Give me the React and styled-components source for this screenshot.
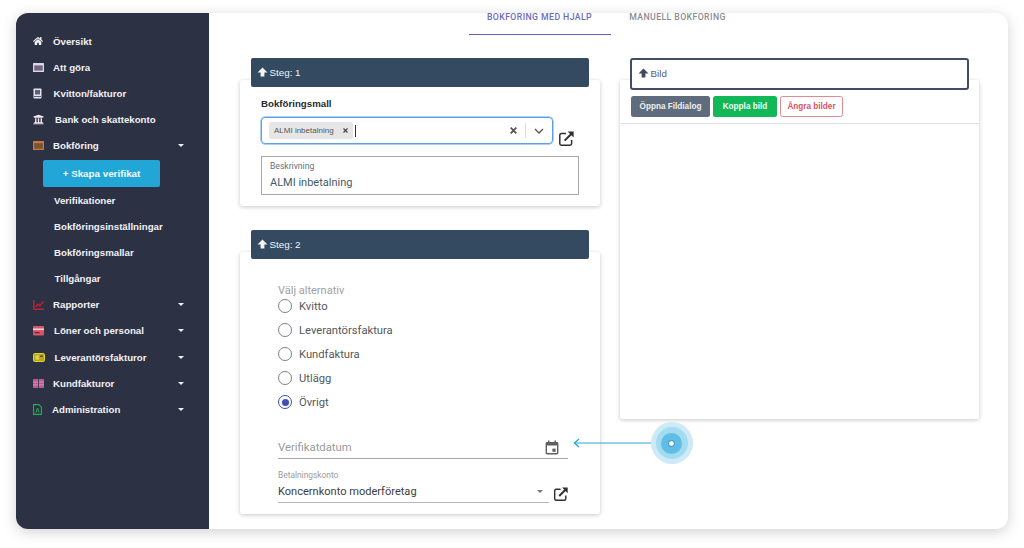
import React from 'react';
import styled, { createGlobalStyle } from 'styled-components';
import { FaHome, FaUniversity } from 'react-icons/fa';

const Global = createGlobalStyle`
  html, body { margin: 0; padding: 0; background: #fff; }
  body { font-family: Roboto, "Liberation Sans", sans-serif; }
  * { box-sizing: border-box; }
`;

const Page = styled.div`
  width: 1024px;
  height: 548px;
  padding: 13px 16px 19px;
  overflow: hidden;
  position: relative;
`;
const Shell = styled.div`
  display: flex;
  height: 516px;
  border-radius: 12px;
  overflow: hidden;
  background: #fff;
  box-shadow: 0 3px 14px rgba(0, 0, 0, 0.18);
`;
const Sidebar = styled.nav`
  width: 193px;
  flex: none;
  background: #2c3144;
  padding-top: 15px;
  display: flex;
  flex-direction: column;
`;
const NavRow = styled.div`
  height: 26.2px;
  flex: none;
  display: flex;
  align-items: center;
  padding-left: ${p => p.$left || 17}px;
  padding-right: 25px;
  font: bold 9.7px "Liberation Sans", Arial, sans-serif;
  color: #f1f1f5;
  white-space: nowrap;
`;
const IconSlot = styled.span`
  width: ${p => p.$w}px;
  flex: none;
  display: flex;
  align-items: center;
`;
const Caret = styled.span`
  margin-left: auto;
  width: 0;
  height: 0;
  border-left: 3.5px solid transparent;
  border-right: 3.5px solid transparent;
  border-top: 3.5px solid #f1f1f5;
`;
const SubRow = styled(NavRow)`
  padding-left: ${p => p.$left || 38}px;
`;
const CreateBtn = styled.div`
  margin: 1px 0 0 27px;
  width: 117px;
  height: 27px;
  flex: none;
  background: #22a6d8;
  border-radius: 2px;
  display: flex;
  align-items: center;
  justify-content: center;
  color: #f4fbfe;
  font: bold 9.8px "Liberation Sans", Arial, sans-serif;
`;
const Main = styled.main`
  flex: 1;
  min-width: 0;
  display: flex;
  flex-direction: column;
`;
const Tabs = styled.div`
  display: flex;
  height: 22px;
  margin-left: 260px;
`;
const Tab = styled.div`
  width: ${p => p.$w}px;
  height: 21.5px;
  text-align: center;
  padding-right: 1px;
  font: 500 8.7px/9px Roboto, sans-serif;
  letter-spacing: 0.42px;
  color: ${p => (p.$active ? '#6b6bbd' : '#8b8c92')};
  border-bottom: ${p => (p.$active ? '1.5px solid #5f62b8' : 'none')};
  white-space: nowrap;
`;
const Columns = styled.div`
  display: flex;
  padding-left: 31px;
  gap: 20px;
  margin-top: 23px;
`;
const LeftCol = styled.div`
  width: 360px;
  display: flex;
  flex-direction: column;
  gap: 24px;
`;
const RightCol = styled.div`
  width: 359px;
`;
const StepBar = styled.div`
  margin: 0 11px 0 10.5px;
  height: 29px;
  background: #344a60;
  border-radius: 2px;
  display: flex;
  align-items: center;
  gap: 1.5px;
  padding-left: 6.5px;
  padding-bottom: 1px;
  color: #f2f4f6;
  font: 400 9.8px "Liberation Sans", Arial, sans-serif;
  position: relative;
  z-index: 1;
`;
const Card = styled.section`
  background: #fff;
  border-radius: 3px;
  box-shadow: 0 1px 4px rgba(0, 0, 0, 0.22);
  margin-top: -7px;
  padding-top: 7px;
  height: ${p => p.$h}px;
`;
const Arrow = ({ color }) => (
  <svg width="11" height="10" viewBox="0 0 11 10">
    <path d="M5.5.6 10.5 5.5H7.4V9.6H3.6V5.5H.5Z" fill={color} />
  </svg>
);
const MallLabel = styled.div`
  margin: 10px 0 0 21px;
  font: bold 9.7px/14px "Liberation Sans", Arial, sans-serif;
  color: #2a2a2a;
`;
const MallRow = styled.div`
  display: flex;
  margin: 6px 0 0 21px;
  height: 27px;
  align-items: flex-start;
`;
const Select = styled.div`
  width: 292px;
  height: 27px;
  border: 1px solid #5d9fe8;
  border-radius: 4px;
  box-shadow: 0 0 0 0.5px #5d9fe8;
  display: flex;
  align-items: center;
  padding-left: 7px;
`;
const Chip = styled.div`
  height: 17px;
  width: 84px;
  background: #e6e6e6;
  border-radius: 2px;
  display: flex;
  align-items: center;
  justify-content: space-between;
  padding: 0 5px;
  font: 400 8px "Liberation Sans", Arial, sans-serif;
  color: #555;
`;
const Cursor = styled.span`
  width: 1px;
  height: 12px;
  background: #333;
  margin-left: 2px;
`;
const SelectEnd = styled.div`
  margin-left: auto;
  display: flex;
  align-items: center;
  height: 100%;
  padding-right: 8px;
`;
const Sep = styled.span`
  width: 1px;
  height: 15px;
  background: #ddd;
  margin: 0 8px;
`;
const LinkBox = styled.span`
  display: block;
  margin: ${p => p.$m};
  line-height: 0;
`;
const DescBox = styled.div`
  margin: 12px 0 0 21px;
  width: 318px;
  height: 39px;
  border: 1px solid #a9a9ab;
  padding: 4px 8px;
`;
const DescLabel = styled.div`
  font: 400 8.6px/11px Roboto, sans-serif;
  color: #66707a;
`;
const DescValue = styled.div`
  font: 400 11px/15px Roboto, sans-serif;
  color: #3f5a6c;
  margin-top: 3px;
`;
const Options = styled.div`
  margin: 25px 0 0 38px;
`;
const OptLegend = styled.div`
  font: 400 11px/14px Roboto, sans-serif;
  color: #a0a0a0;
`;
const OptRow = styled.label`
  height: 24px;
  display: flex;
  align-items: center;
  gap: 7px;
  font: 400 11.2px Roboto, sans-serif;
  color: #55585b;
  margin-top: ${p => (p.$first ? '-4px' : 0)};
`;
const Radio = styled.span`
  width: 14px;
  height: 14px;
  border-radius: 50%;
  border: 1.4px solid ${p => (p.$on ? '#3f51b5' : '#7f7f7f')};
  display: flex;
  align-items: center;
  justify-content: center;
  &::after {
    content: '';
    display: ${p => (p.$on ? 'block' : 'none')};
    width: 7px;
    height: 7px;
    border-radius: 50%;
    background: #3f51b5;
  }
`;
const DateField = styled.div`
  margin: 21px 0 0 38px;
  width: 290px;
  height: 24px;
  border-bottom: 1px solid #a8a8a8;
  display: flex;
  align-items: center;
  justify-content: space-between;
  padding: 2px 9px 0 0;
  font: 400 11.3px Roboto, sans-serif;
  color: #9a9a9a;
`;
const AccountLabel = styled.div`
  margin: 10.5px 0 0 38px;
  font: 400 8.4px/11px Roboto, sans-serif;
  color: #9b9b9b;
`;
const AccountRow = styled.div`
  display: flex;
  margin-left: 38px;
  align-items: flex-start;
`;
const AccountSelect = styled.div`
  width: 271px;
  height: 22px;
  border-bottom: 1px solid #b5b5b5;
  display: flex;
  align-items: center;
  justify-content: space-between;
  padding-right: 6px;
  font: 400 11.05px Roboto, sans-serif;
  color: #3d3d3d;
`;
const SmallCaret = styled.span`
  width: 0;
  height: 0;
  border-left: 3.5px solid transparent;
  border-right: 3.5px solid transparent;
  border-top: 3.5px solid #777;
`;
const BildBar = styled.div`
  margin: 0 10px;
  height: 32px;
  background: #fff;
  border: 2px solid #414d64;
  border-radius: 3px;
  display: flex;
  align-items: center;
  gap: 1.5px;
  padding: 0 0 2px 6px;
  font: 400 9.8px "Liberation Sans", Arial, sans-serif;
  color: #5a6068;
  position: relative;
  z-index: 1;
`;
const ImageCard = styled.section`
  margin-top: -10px;
  height: 339px;
  background: #fff;
  border-radius: 2px;
  box-shadow: 0 1px 4px rgba(0, 0, 0, 0.22);
`;
const BtnRow = styled.div`
  display: flex;
  gap: 3px;
  padding: 16px 0 0 11px;
  height: 44px;
  border-bottom: 1px solid #e2e2e2;
`;
const Btn = styled.div`
  height: 21px;
  width: ${p => p.$w}px;
  border-radius: 2.5px;
  display: flex;
  align-items: center;
  justify-content: center;
  font: bold 8.2px "Liberation Sans", Arial, sans-serif;
  color: ${p => p.$fg};
  background: ${p => p.$bg};
  border: ${p => (p.$line ? `1px solid ${p.$line}` : 'none')};
`;
const Hotspot = styled.div`
  position: absolute;
  left: 650.5px;
  top: 422px;
  width: 42px;
  height: 42px;
  border-radius: 50%;
  background: #cdeaf6;
  display: flex;
  align-items: center;
  justify-content: center;
  &::before {
    content: '';
    position: absolute;
    width: 32px;
    height: 32px;
    border-radius: 50%;
    background: #a3dbf0;
  }
  &::after {
    content: '';
    position: absolute;
    width: 21px;
    height: 21px;
    border-radius: 50%;
    background: #5fbde6;
  }
`;
const HotDot = styled.span`
  width: 7px;
  height: 7px;
  border-radius: 50%;
  background: #fff;
  border: 1px solid #2a87bd;
  position: relative;
  z-index: 1;
`;
const Pointer = styled.svg`
  position: absolute;
  left: 573px;
  top: 437px;
`;

const Ext = ({ s = 17 }) => (
  <svg width={s} height={s} viewBox="0 0 17 17" fill="none" stroke="#2f2f2f">
    <path d="M8 3.4H3.4a1.6 1.6 0 0 0-1.6 1.6v8.6a1.6 1.6 0 0 0 1.6 1.6H12a1.6 1.6 0 0 0 1.6-1.6V10" strokeWidth="1.5" />
    <path d="M6.6 10.6 14 3.2" strokeWidth="2" />
    <path d="M9.6 1.6H15.6V7.6Z" fill="#2f2f2f" stroke="none" />
  </svg>
);
const Cal = () => (
  <svg width="14" height="15" viewBox="0 0 14 15" fill="#5f5f5f">
    <path fillRule="evenodd" d="M3 .6h1.5v1.5h5V.6H11v1.5h1a1.4 1.4 0 0 1 1.4 1.4v9.6a1.4 1.4 0 0 1-1.4 1.4H2A1.4 1.4 0 0 1 .6 13.1V3.5A1.4 1.4 0 0 1 2 2.1h1ZM2 5.6v7.5h10V5.6Z" />
    <rect x="7.4" y="8.6" width="3.2" height="3.2" />
  </svg>
);
const X = ({ s = 6, w = 1.5, c = '#444' }) => (
  <svg width={s} height={s} viewBox="0 0 6 6" stroke={c} strokeWidth={w}><path d="M.6.6l4.8 4.8M5.4.6L.6 5.4" /></svg>
);

const TodoIcon = () => (
  <svg width="11" height="9" viewBox="0 0 11 9">
    <rect width="11" height="9" rx=".6" fill="#d9d9e6" />
    <rect x="1.2" y="2.4" width="8.6" height="5.2" fill="#77647e" />
  </svg>
);
const BookIcon = () => (
  <svg width="11" height="9" viewBox="0 0 11 9">
    <rect width="11" height="9" rx=".6" fill="#c47a3c" />
    <rect x="1.2" y="2.2" width="8.6" height="5.5" fill="#7c5230" />
  </svg>
);
const ReceiptIcon = () => (
  <svg width="9" height="11" viewBox="0 0 9 11">
    <rect x=".5" y=".5" width="8" height="10" rx=".8" fill="#e4e4ec" />
    <rect x="2" y="2" width="5" height="4.5" fill="#5c6074" />
    <rect x="1" y="8" width="7" height="1" fill="#5c6074" />
  </svg>
);
const ChartIcon = () => (
  <svg width="11" height="10" viewBox="0 0 11 10" fill="none" stroke="#c21f2f" strokeWidth="1.5">
    <path d="M.8 0v9.2H11" />
    <path d="M2.5 7 5 4.2l1.8 1.6L10.5 1.5" />
  </svg>
);
const PayIcon = () => (
  <svg width="11" height="10" viewBox="0 0 11 10">
    <rect width="11" height="9.5" rx="1" fill="#d6556a" />
    <rect y="2.5" width="11" height="1.6" fill="#f3cfd5" />
    <rect x="1.5" y="6" width="5" height="1.2" fill="#5a2a3a" />
  </svg>
);
const SupplierIcon = () => (
  <svg width="12" height="9" viewBox="0 0 12 9">
    <rect x=".5" y=".5" width="11" height="8" rx="1.2" fill="#b3a62c" stroke="#e3d22f" />
    <rect x="2.5" y="2.2" width="3.5" height="4.5" fill="#e3d22f" />
    <rect x="7" y="2.5" width="3" height="1.5" fill="#56561f" />
  </svg>
);
const CustomerIcon = () => (
  <svg width="11" height="9" viewBox="0 0 11 9">
    <rect width="11" height="9" rx=".6" fill="#b85c90" />
    <rect y="2.6" width="11" height="1" fill="#e28cbd" />
    <rect y="5.4" width="11" height="1" fill="#e28cbd" />
    <rect x="5" width="1" height="9" fill="#4a3f5c" />
  </svg>
);
const FileIcon = () => (
  <svg width="9" height="11" viewBox="0 0 9 11" fill="none">
    <path d="M.6.6h5.2l2.6 2.6v7.200H.6Z" stroke="#22b14c" strokeWidth="1.1" />
    <path d="M3 8.5 4.5 4 6 8.5" stroke="#22b14c" strokeWidth="1" />
  </svg>
);

const nav1 = [
  { t: 'Översikt', w: 20, icon: <FaHome size={10} color="#f1f1f5" /> },
  { t: 'Att göra', w: 20, icon: <TodoIcon /> },
  { t: 'Kvitton/fakturor', w: 20.5, icon: <ReceiptIcon /> },
  { t: 'Bank och skattekonto', w: 22, icon: <FaUniversity size={11} color="#f3e9f1" /> },
  { t: 'Bokföring', w: 20, caret: true, icon: <BookIcon /> },
];
const subs = [
  { t: 'Verifikationer' },
  { t: 'Bokföringsinställningar' },
  { t: 'Bokföringsmallar' },
  { t: 'Tillgångar', left: 38.5 },
];
const nav2 = [
  { t: 'Rapporter', w: 20, icon: <ChartIcon /> },
  { t: 'Löner och personal', w: 21, icon: <PayIcon /> },
  { t: 'Leverantörsfakturor', w: 21.5, icon: <SupplierIcon /> },
  { t: 'Kundfakturor', w: 20, icon: <CustomerIcon /> },
  { t: 'Administration', w: 19, icon: <FileIcon /> },
];
const options = ['Kvitto', 'Leverantörsfaktura', 'Kundfaktura', 'Utlägg', 'Övrigt'];

export default function App() {
  return (
    <Page>
      <Global />
      <Shell>
        <Sidebar>
          {nav1.map(n => (
            <NavRow key={n.t}>
              <IconSlot $w={n.w}>{n.icon}</IconSlot>
              {n.t}
              {n.caret && <Caret />}
            </NavRow>
          ))}
          <CreateBtn>+ Skapa verifikat</CreateBtn>
          {subs.map(s => (
            <SubRow key={s.t} $left={s.left}>{s.t}</SubRow>
          ))}
          {nav2.map(n => (
            <NavRow key={n.t}>
              <IconSlot $w={n.w}>{n.icon}</IconSlot>
              {n.t}
              <Caret />
            </NavRow>
          ))}
        </Sidebar>
        <Main>
          <Tabs>
            <Tab $w={142} $active>BOKFÖRING MED HJÄLP</Tab>
            <Tab $w={134}>MANUELL BOKFÖRING</Tab>
          </Tabs>
          <Columns>
            <LeftCol>
              <div>
                <StepBar><Arrow color="#f2f4f6" />Steg: 1</StepBar>
                <Card $h={126}>
                  <MallLabel>Bokföringsmall</MallLabel>
                  <MallRow>
                    <Select>
                      <Chip>ALMI inbetalning <X s={5} w={1.4} /></Chip>
                      <Cursor />
                      <SelectEnd>
                        <X s={7} w={1.5} c="#555" />
                        <Sep />
                        <svg width="10" height="6" viewBox="0 0 10 6" fill="none" stroke="#555" strokeWidth="1.3"><path d="M1 1l4 4 4-4" /></svg>
                      </SelectEnd>
                    </Select>
                    <LinkBox $m="13px 0 0 5px"><Ext /></LinkBox>
                  </MallRow>
                  <DescBox>
                    <DescLabel>Beskrivning</DescLabel>
                    <DescValue>ALMI inbetalning</DescValue>
                  </DescBox>
                </Card>
              </div>
              <div>
                <StepBar><Arrow color="#f2f4f6" />Steg: 2</StepBar>
                <Card $h={262}>
                  <Options>
                    <OptLegend>Välj alternativ</OptLegend>
                    {options.map((o, i) => (
                      <OptRow key={o} $first={i === 0}>
                        <Radio $on={o === 'Övrigt'} />
                        {o}
                      </OptRow>
                    ))}
                  </Options>
                  <DateField>Verifikatdatum<Cal /></DateField>
                  <AccountLabel>Betalningskonto</AccountLabel>
                  <AccountRow>
                    <AccountSelect>Koncernkonto moderföretag<SmallCaret /></AccountSelect>
                    <LinkBox $m="5px 0 0 3.5px"><Ext s={16} /></LinkBox>
                  </AccountRow>
                </Card>
              </div>
            </LeftCol>
            <RightCol>
              <BildBar><Arrow color="#3d4a62" />Bild</BildBar>
              <ImageCard>
                <BtnRow>
                  <Btn $w={79} $bg="#5f6c7e" $fg="#eef0f2">Öppna Fildialog</Btn>
                  <Btn $w={64} $bg="#12b757" $fg="#f2fbf5">Koppla bild</Btn>
                  <Btn $w={63} $bg="#fff" $fg="#d9505f" $line="#e08a96">Ångra bilder</Btn>
                </BtnRow>
              </ImageCard>
            </RightCol>
          </Columns>
        </Main>
      </Shell>
      <Pointer width="80" height="12" viewBox="0 0 80 12" fill="none" stroke="#2da8d8">
        <path d="M1 6H80" strokeWidth="1.2" />
        <path d="M6 2 1.5 6 6 10" strokeWidth="1.4" />
      </Pointer>
      <Hotspot><HotDot /></Hotspot>
    </Page>
  );
}
